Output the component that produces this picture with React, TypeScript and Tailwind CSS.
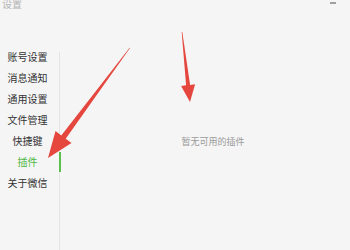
const menu = ['账号设置', '消息通知', '通用设置', '文件管理', '快捷键', '插件', '关于微信'];
const active = '插件';

export default function App() {
  return (
    <div className="relative w-[350px] h-[250px] bg-[#f5f5f5] overflow-hidden font-['Noto_Sans_CJK_SC',sans-serif]">
      {/* Title bar */}
      <div className="flex items-start justify-between h-[46px]">
        <span className="pl-[2px] -mt-[2px] text-[10px] leading-[12px] text-[#b4b4b4]">设置</span>
        <span className="mt-[2px] mr-[14px] w-[6px] h-[2px] bg-[#a0a0a0]" />
      </div>

      {/* Body */}
      <div className="flex h-[204px]">
        <nav className="w-[55px] flex flex-col">
          {menu.map((item) => (
            <div
              key={item}
              className={`h-[21px] flex items-center justify-center text-[10px] leading-none ${
                item === active ? 'text-[#4cb63f]' : 'text-[#333333]'
              }`}
            >
              {item}
            </div>
          ))}
        </nav>
        <div className="ml-[4px] mt-[6px] w-px bg-[#e4e4e4] flex flex-col">
          <div className="mt-[100px] h-[20px] w-[2px] shrink-0 bg-[#5cc04c]" />
        </div>
        <div className="flex-1 flex items-center justify-center pl-[16px] pb-[14px]">
          <span className="text-[9px] leading-none text-[#9a9a9a]">暂无可用的插件</span>
        </div>
      </div>

      {/* Annotation arrows */}
      <svg className="absolute inset-0 pointer-events-none" width="350" height="250" viewBox="0 0 350 250">
        <polygon
          points="130,48 65.7,138.8 71.5,143.1 48,158 55.5,131.1 61.3,135.5 129.6,47.7"
          fill="#e5463d"
        />
        <polygon
          points="182.3,32 190.1,84.9 195.1,84.3 190,102 181.1,85.9 186.1,85.3 181.7,32"
          fill="#e5463d"
        />
      </svg>
    </div>
  );
}
